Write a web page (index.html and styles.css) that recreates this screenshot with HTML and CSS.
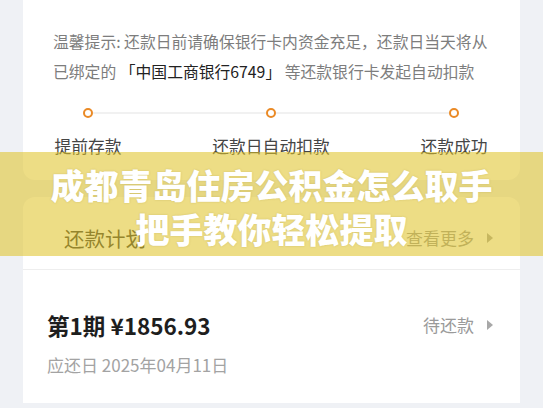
FILE: index.html
```html
<!DOCTYPE html>
<html>
    <head>
        <meta charset="utf-8">
        <link rel="stylesheet" href="styles.css">
    </head>
    <body>
        <div class="page">
            <div class="card card-top">
                <p class="tip">温馨提示: 还款日前请确保银行卡内资金充足，还款日当天将从已绑定的 <span class="bank">「中国工商银行6749」</span> 等还款银行卡发起自动扣款</p>

                <div class="track">
                    <span class="dot"></span>
                    <span class="bar"></span>
                    <span class="dot"></span>
                    <span class="bar"></span>
                    <span class="dot"></span>
                </div>
                <div class="labels">
                    <span>提前存款</span>
                    <span>还款日自动扣款</span>
                    <span>还款成功</span>
                </div>
            </div>

            <div class="card card-plan">
                <div class="plan-head">
                    <span class="plan-title">还款计划</span>
                    <span class="more">查看更多 <i class="arrow"></i></span>
                </div>
                <div class="plan-row">
                    <div class="row-top">
                        <span class="amount">第1期 ¥1856.93</span>
                        <span class="status">待还款 <i class="arrow"></i></span>
                    </div>
                    <div class="due">应还日 2025年04月11日</div>
                </div>
            </div>
        </div>

        <div class="banner">
            <h1>成都青岛住房公积金怎么取手<br>把手教你轻松提取</h1>
        </div>
    </body>
</html>
```

FILE: styles.css
```css
html, body {
    margin: 0;
    padding: 0;
    overflow: hidden;
}

body {
    width: 543px;
    height: 408px;
    background: #eff1f5;
    font-family: "Noto Sans CJK SC", "Noto Sans", sans-serif;
    position: relative;
}

.page {
    padding: 0 23px;
}

.card {
    background: #fff;
}

.card-top {
    border-radius: 0 0 12px 12px;
    padding: 27px 31px 22px 30px;
}

.tip {
    margin: 0;
    font-size: 15.8px;
    line-height: 30px;
    color: #7d7d7d;
}

.tip .bank {
    color: #222;
}

.track {
    display: flex;
    align-items: center;
    padding: 0 30px;
    margin-top: 21px;
}

.dot {
    width: 10px;
    height: 10px;
    box-sizing: border-box;
    border: 2.6px solid #ea8a26;
    border-radius: 50%;
    flex: none;
}

.bar {
    flex: 1;
    height: 2px;
    background: #f1f1f1;
}

.labels {
    display: grid;
    grid-template-columns: 70px 1fr 70px;
    margin-top: 16px;
    font-size: 16.8px;
    line-height: 24px;
    color: #454545;
    white-space: nowrap;
}

.labels span {
    display: flex;
    justify-content: center;
}

.card-plan {
    margin-top: 17px;
    border-radius: 12px 12px 0 0;
    height: 206px;
}

.plan-head {
    display: flex;
    justify-content: space-between;
    align-items: center;
    padding: 28px 27px 18px 41px;
    border-bottom: 1px solid #eeeeee;
}

.plan-title {
    font-size: 20.5px;
    line-height: 26px;
    color: #333;
}

.more,
.status {
    font-size: 17px;
    line-height: 24px;
    color: #9a9a9a;
    display: flex;
    align-items: center;
}

.arrow {
    display: inline-block;
    width: 0;
    height: 0;
    margin-left: 13px;
    border-top: 5px solid transparent;
    border-bottom: 5px solid transparent;
    border-left: 6px solid #a8a8a8;
}

.plan-row {
    padding: 40px 27px 0 24px;
}

.row-top {
    display: flex;
    justify-content: space-between;
    align-items: center;
}

.amount {
    font-size: 22.5px;
    line-height: 30px;
    font-weight: 700;
    color: #1e1e1e;
}

.due {
    margin-top: 13px;
    font-size: 17px;
    line-height: 24px;
    color: #a3a3a3;
}

.banner {
    position: absolute;
    left: 0;
    top: 152px;
    width: 543px;
    height: 104px;
    background: rgba(224, 196, 40, 0.57);
}

.banner h1 {
    margin: 0;
    padding-top: 11px;
    font-size: 34px;
    line-height: 44px;
    font-weight: 900;
    color: #fff;
    text-align: center;
    text-shadow: 0 0 2px rgba(120, 100, 20, 0.25);
}
```
